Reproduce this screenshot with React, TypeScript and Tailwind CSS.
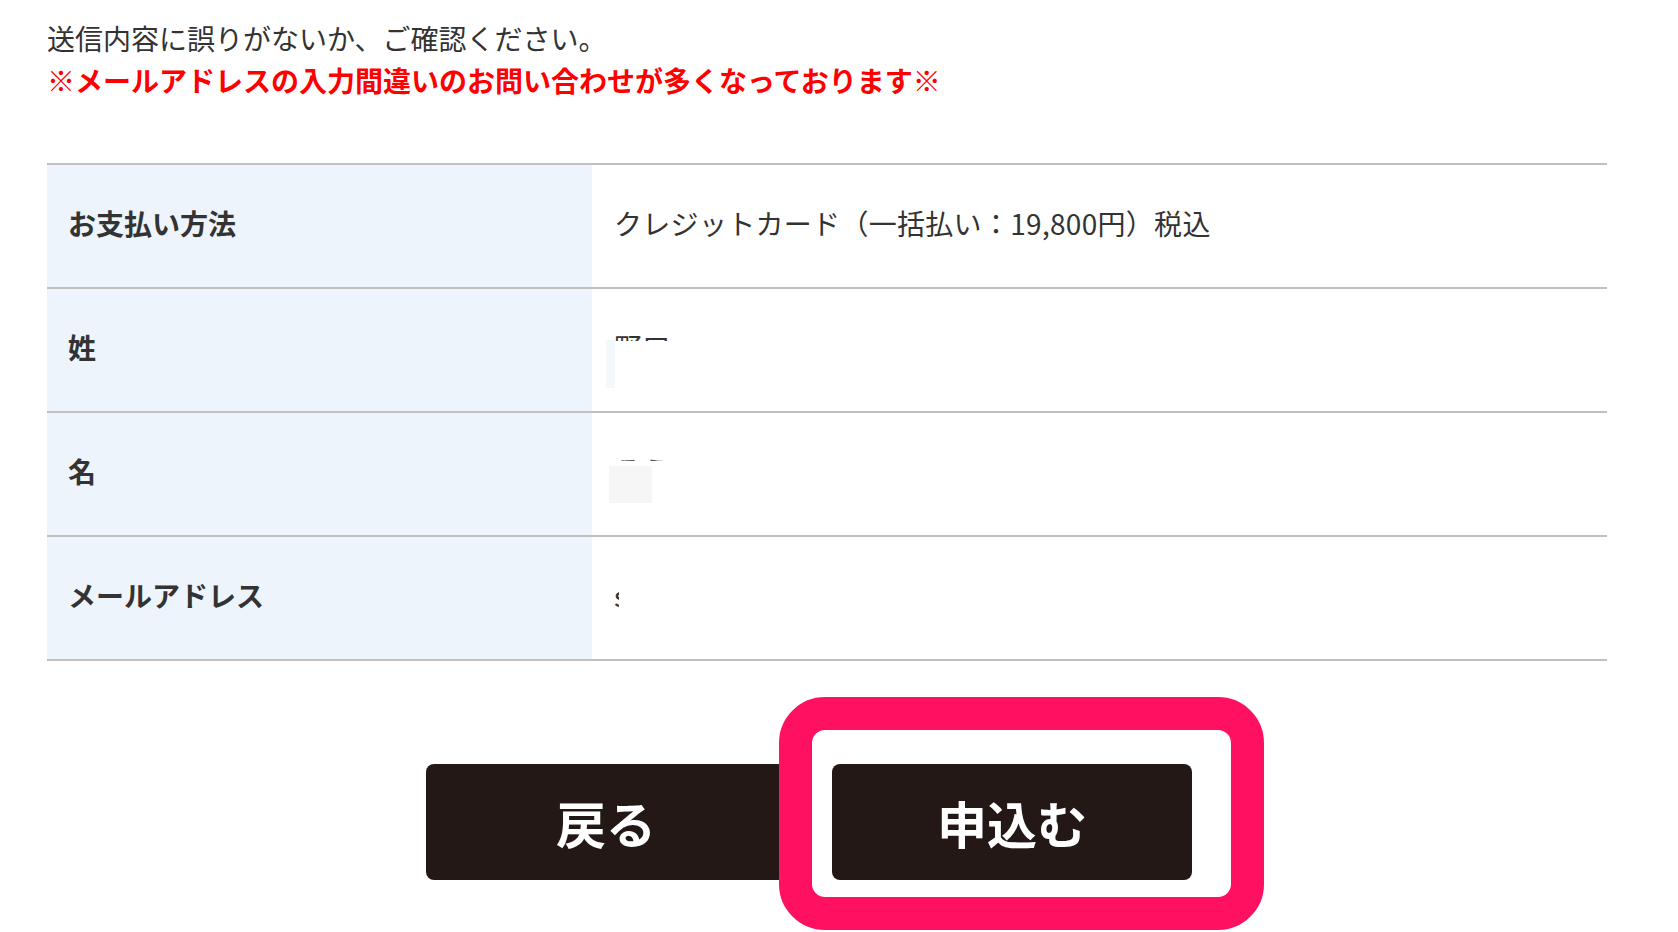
const rows = [
  { label: 'お支払い方法', value: 'クレジットカード（一括払い：19,800円）税込' },
  { label: '姓', value: '' },
  { label: '名', value: '' },
  { label: 'メールアドレス', value: '' },
];

const App = () => {
  return (
    <div className="min-h-[932px] bg-white px-[47px] pt-[17px] font-['Noto_Sans_CJK_JP',sans-serif] text-[#333]">
      <p className="text-[28px] leading-[42px]">送信内容に誤りがないか、ご確認ください。</p>
      <p className="text-[28px] leading-[42px] font-bold text-[#ff0000]">
        ※メールアドレスの入力間違いのお問い合わせが多くなっております※
      </p>

      {/* confirm table */}
      <div className="mt-[62px] w-[1560px] border-t-2 border-[#c0c0c0]">
        {rows.map((row, i) => (
          <div key={row.label} className="flex h-[124px] border-b-2 border-[#c0c0c0]">
            <div className="flex w-[545px] items-center bg-[#edf4fb] pb-[6px] pl-[21px] text-[28px] font-bold">{row.label}</div>
            <div className="relative flex flex-1 items-center pb-[6px] pl-[22px] text-[28px] tracking-[0.3px]">
              {i === 0 && row.value}
              {i === 1 && (
                <>
                  <span className="mt-[-20px] inline-block h-[8px] overflow-hidden leading-[28px]">野口</span>
                  <span className="absolute left-[14px] top-[51px] h-[48px] w-[9px] bg-[#f3f8fd]" />
                </>
              )}
              {i === 2 && (
                <>
                  <span className="mt-[-26px] inline-block h-[5px] overflow-hidden leading-[28px] text-[#555]">そう</span>
                  <span className="absolute left-[17px] top-[53px] h-[37px] w-[43px] bg-[#f6f6f6]" />
                </>
              )}
              {i === 3 && <span className="inline-block w-[5px] overflow-hidden leading-[28px]">s</span>}
            </div>
          </div>
        ))}
      </div>

      {/* buttons */}
      <div className="mt-[103px] flex gap-[46px] pl-[379px]">
        <button type="button" className="h-[116px] w-[360px] rounded-[8px] bg-[#231815] text-[50px] font-bold text-white">
          戻る
        </button>
        <div className="relative">
          <button type="button" className="h-[116px] w-[360px] rounded-[8px] bg-[#231815] text-[50px] font-bold text-white">
            申込む
          </button>
          <div className="pointer-events-none absolute -left-[53px] -top-[67px] -right-[72px] -bottom-[50px] z-10 rounded-[46px] border-[33px] border-[#ff1060]" />
        </div>
      </div>
    </div>
  );
};

export default App;
